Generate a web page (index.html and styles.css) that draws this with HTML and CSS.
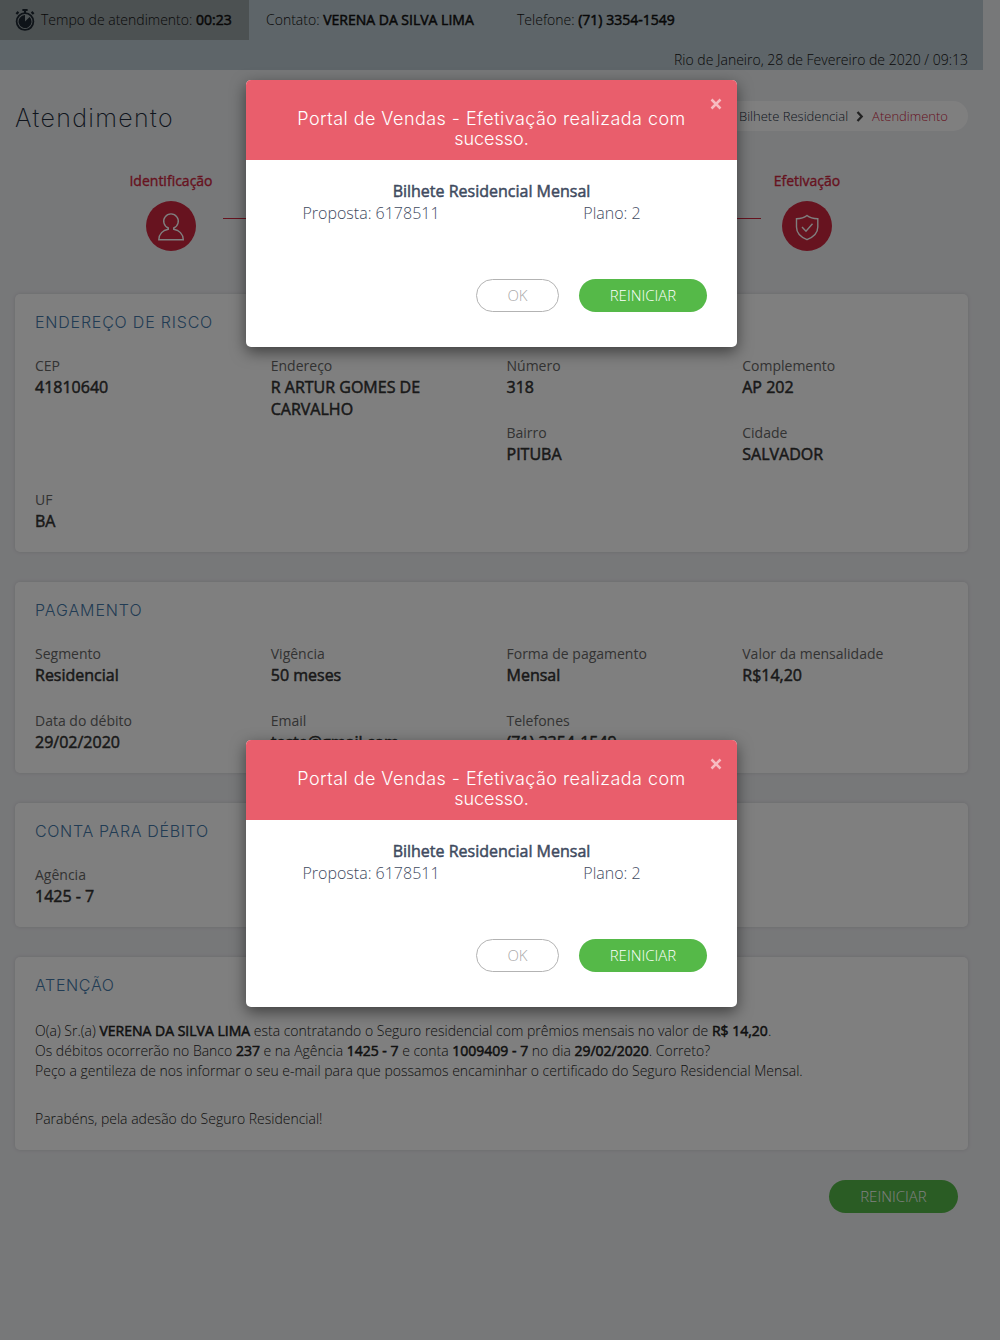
FILE: index.html
```html
<!DOCTYPE html>
<html lang="pt-BR">
<head>
<meta charset="utf-8">
<title>Atendimento</title>
<link rel="stylesheet" href="styles.css">
</head>
<body>
<div class="page">
  <header class="topbar">
    <div class="topbar-row">
      <div class="timer">
        <svg width="20" height="22" viewBox="0 0 19 21"><path d="M7 0h5v2H7zM8.500 1h2v3h-2zM.5 4l2-2 1.500 1.500-2 2zM15 3.500L16.500 2l2 2L17 5.500z" fill="#1c2630"/><circle cx="9.500" cy="12" r="8" fill="none" stroke="#1c2630" stroke-width="1.700"/><path d="M9.500 5.800A6.200 6.200 0 1 0 13.900 7.600L9.500 12z" fill="#1c2630"/></svg>
        <span>Tempo de atendimento: <b>00:23</b></span>
      </div>
      <span class="contact">Contato: <b>VERENA DA SILVA LIMA</b></span>
      <span class="phone">Telefone: <b>(71) 3354-1549</b></span>
    </div>
    <div class="date">Rio de Janeiro, 28 de Fevereiro de 2020 / 09:13</div>
  </header>

  <main class="content">
    <div class="heading">
      <h1>Atendimento</h1>
      <nav class="breadcrumb">
        <span>Bilhete Residencial</span>
        <svg width="8" height="12" viewBox="0 0 8 12"><path d="M1.500 2l4.200 4.500-4.200 4.500" fill="none" stroke="#444" stroke-width="2.300"/></svg>
        <span class="current">Atendimento</span>
      </nav>
    </div>

    <div class="steps">
      <div class="step">
        <span class="step-name">Identificação</span>
        <span class="step-icon"><svg width="50" height="50" viewBox="0 0 50 50"><path d="M22.300 28.200V27A7.300 7.300 0 1 1 27.700 27V28.200C33 29.200 37.300 33 37.300 38.800H12.800C12.800 33 17 29.200 22.300 28.200z"/></svg></span>
      </div>
      <div class="step-line"></div>
      <div class="step">
        <span class="step-name">Efetivação</span>
        <span class="step-icon"><svg width="50" height="50" viewBox="0 0 50 50"><path d="M25 14.500C22 17 18.500 17.700 14.500 17.700V26C14.500 32 18.500 36 25 38.700C31.500 36 35.800 32 35.800 26V17.700C31.500 17.700 28 17 25 14.500z"/><path d="M20 26l4 4.300 6.500-7.500"/></svg></span>
      </div>
    </div>

    <section class="card">
      <h2 class="t-risk">ENDEREÇO DE RISCO</h2>
      <div class="fields">
        <div class="field"><span>CEP</span><b>41810640</b></div>
        <div class="field"><span>Endereço</span><b>R ARTUR GOMES DE CARVALHO</b></div>
        <div class="field"><span>Número</span><b>318</b></div>
        <div class="field"><span>Complemento</span><b>AP 202</b></div>
        <div class="field col-3"><span>Bairro</span><b>PITUBA</b></div>
        <div class="field"><span>Cidade</span><b>SALVADOR</b></div>
        <div class="field"><span>UF</span><b>BA</b></div>
      </div>
    </section>

    <section class="card">
      <h2 class="t-pay">PAGAMENTO</h2>
      <div class="fields">
        <div class="field"><span>Segmento</span><b>Residencial</b></div>
        <div class="field"><span>Vigência</span><b>50 meses</b></div>
        <div class="field"><span>Forma de pagamento</span><b>Mensal</b></div>
        <div class="field"><span>Valor da mensalidade</span><b>R$14,20</b></div>
        <div class="field"><span>Data do débito</span><b>29/02/2020</b></div>
        <div class="field"><span>Email</span><b>teste@gmail.com</b></div>
        <div class="field"><span>Telefones</span><b>(71) 3354-1549</b></div>
      </div>
    </section>

    <section class="card">
      <h2 class="t-debit">CONTA PARA DÉBITO</h2>
      <div class="fields">
        <div class="field"><span>Agência</span><b>1425 - 7</b></div>
      </div>
    </section>

    <section class="card notice">
      <h2 class="t-notice">ATENÇÃO</h2>
      <p>O(a) Sr.(a) <b>VERENA DA SILVA LIMA</b> esta contratando o Seguro residencial com prêmios mensais no valor de <b>R$ 14,20</b>.<br>
      Os débitos ocorrerão no Banco <b>237</b> e na Agência <b>1425 - 7</b> e conta <b>1009409 - 7</b> no dia <b>29/02/2020</b>. Correto?<br>
      Peço a gentileza de nos informar o seu e-mail para que possamos encaminhar o certificado do Seguro Residencial Mensal.</p>
      <p class="congrats">Parabéns, pela adesão do Seguro Residencial!</p>
    </section>

    <div class="actions"><button class="btn green wide">REINICIAR</button></div>
  </main>
</div>

<div class="backdrop"></div>

<div class="modal first">
  <div class="modal-head">
    <h3>Portal de Vendas - Efetivação realizada com<br><span>sucesso.</span></h3>
    <svg class="close" width="12" height="12" viewBox="0 0 12 12"><path d="M1.500 1.500l9 9M10.500 1.500l-9 9"/></svg>
  </div>
  <div class="modal-body">
    <b>Bilhete Residencial Mensal</b>
    <div class="plan"><span>Proposta: 6178511</span><span>Plano: 2</span></div>
  </div>
  <div class="modal-foot"><button class="btn outline">OK</button><button class="btn green">REINICIAR</button></div>
</div>

<div class="modal second">
  <div class="modal-head">
    <h3>Portal de Vendas - Efetivação realizada com<br><span>sucesso.</span></h3>
    <svg class="close" width="12" height="12" viewBox="0 0 12 12"><path d="M1.500 1.500l9 9M10.500 1.500l-9 9"/></svg>
  </div>
  <div class="modal-body">
    <b>Bilhete Residencial Mensal</b>
    <div class="plan"><span>Proposta: 6178511</span><span>Plano: 2</span></div>
  </div>
  <div class="modal-foot"><button class="btn outline">OK</button><button class="btn green">REINICIAR</button></div>
</div>
</body>
</html>
```
FILE: styles.css
```css
* { box-sizing: border-box; }
body {
  margin: 0;
  position: relative;
  height: 1340px;
  overflow: hidden;
  background: #eff0f3;
  color: #222;
  font: 300 14px/20px "Open Sans", sans-serif;
}
b { font-weight: 400; -webkit-text-stroke: 0.5px currentColor; }
h1, h2, h3, p { margin: 0; font-weight: 300; }
svg { display: block; flex: none; }
.page { width: 983px; }

.topbar { height: 70px; background: #bccad2; color: #111; }
.topbar-row { display: flex; height: 40px; line-height: 40px; }
.timer { display: flex; align-items: center; gap: 6px; width: 249px; padding-left: 15px; background: #98a2a4; white-space: nowrap; }
.contact { width: 252px; padding-left: 17px; white-space: nowrap; }
.phone { padding-left: 16px; }
.date { padding: 10px 15px 0 0; text-align: right; }

.content { padding: 0 15px; }
.heading { display: flex; justify-content: space-between; align-items: center; height: 60px; margin-top: 16px; }
h1 { font: 200 25px/32px Inter, sans-serif; letter-spacing: 1.35px; color: #202b3a; margin-top: 4px; }
.breadcrumb { display: flex; align-items: center; justify-content: flex-end; gap: 8px; width: 420px; height: 30px; padding-right: 20px; border-radius: 15px; background: #fff; color: #222d3d; font-size: 13px; }
.current { color: #ce263e; }

.steps { display: flex; align-items: flex-start; height: 118px; margin: 25px 109px 5px 104px; }
.step { display: flex; flex-direction: column; align-items: center; gap: 10px; width: 104px; }
.step-name { color: #ce263e; font-weight: 400; -webkit-text-stroke: 0.35px currentColor; }
.step-icon { width: 50px; height: 50px; border-radius: 50%; background: #ce263e; }
.step-icon path { fill: none; stroke: #fff; stroke-width: 1.4; }
.step-line { flex: 1; height: 1px; margin: 47px -6px 0 0; background: #ce263e; }

.card { padding: 16px 20px 19px; margin-bottom: 30px; border-radius: 5px; background: #fff; box-shadow: 0 0 4px rgba(0, 0, 0, .12); }
h2 { font: 300 16px/24px Inter, sans-serif; color: #4478a8; margin-bottom: 21px; }
.t-risk { letter-spacing: .8px; }
.t-pay { letter-spacing: .9px; }
.t-debit { letter-spacing: .66px; }
.t-notice { letter-spacing: .65px; }
.fields { display: grid; grid-template-columns: repeat(4, 235.75px); grid-auto-rows: 44px; row-gap: 23px; margin-right: -30px; }
.field { display: flex; flex-direction: column; width: 190px; line-height: 22px; }
.field span { color: #666; font-weight: 400; }
.field b { margin-top: -1px; font-size: 16px; color: #333; }
.col-3 { grid-column: 3; }
.notice { padding-bottom: 21px; }
.notice h2 { margin-bottom: 24px; }
.notice p { white-space: nowrap; }
.notice .congrats { margin-top: 28px; }
.actions { display: flex; justify-content: flex-end; padding-right: 10px; }

.btn { height: 33px; padding: 0; border: 0; border-radius: 17px; font: 300 15px/31px "Open Sans", sans-serif; }
.green { width: 128px; background: #55b948; color: #fff; }
.wide { width: 129px; }
.outline { width: 83px; border: 1px solid #b3b3b3; background: #fff; color: #aaa; }

.backdrop { position: absolute; inset: 0; background: rgba(0, 0, 0, .5); }
.modal { position: absolute; left: 246px; width: 491px; height: 267px; border-radius: 5px; background: #fff; box-shadow: 0 5px 15px rgba(0, 0, 0, .5); overflow: hidden; color: #3f4b5f; }
.first { top: 80px; }
.second { top: 740px; }
.modal-head { position: relative; height: 80px; padding-top: 29px; background: #e95e6c; color: #fff; text-align: center; }
h3 { font: 300 18px/19.8px Inter, sans-serif; letter-spacing: .45px; white-space: nowrap; }
h3 span { letter-spacing: 0; }
.close { position: absolute; top: 18px; right: 15px; }
.close path { fill: none; stroke: #f6bbc1; stroke-width: 2.5; }
.modal-body { padding-top: 20px; height: 119px; font-size: 16px; line-height: 22px; text-align: center; }
.plan { display: grid; grid-template-columns: 250px 1fr; }
.plan span:last-child { padding-right: 9px; }
.modal-foot { display: flex; justify-content: flex-end; gap: 20px; padding-right: 30px; }
```
